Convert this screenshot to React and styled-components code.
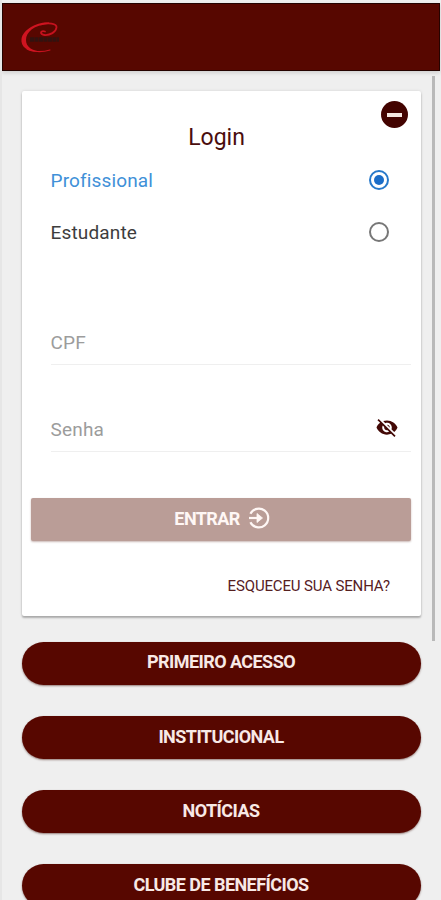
import React, { useState } from "react";
import styled, { createGlobalStyle } from "styled-components";
import { IoMdEyeOff } from "react-icons/io";

const GlobalStyle = createGlobalStyle`
  * { box-sizing: border-box; }
  body {
    margin: 0;
    background: #efefef;
    font-family: Roboto, "Liberation Sans", sans-serif;
    overflow: hidden;
  }
  button { font-family: inherit; border: 0; cursor: pointer; }
`;

const Screen = styled.div`
  width: 441px;
  height: 900px;
  overflow: hidden;
  background: #efefef;
  border-left: 2px solid #e6e6e6;
  display: flex;
  flex-direction: column;
`;

const Header = styled.header`
  flex: none;
  height: 68px;
  margin: 3px 1px 0 0;
  padding-left: 17px;
  display: flex;
  align-items: center;
  background: #570700;
  border: 1px solid #250300;
  box-shadow: 0 2px 4px rgba(0, 0, 0, 0.13);
`;

const Body = styled.div`
  flex: 1;
  min-height: 0;
  display: flex;
  justify-content: space-between;
`;

const Content = styled.main`
  width: 399px;
  margin: 20px 0 0 20px;
`;

const ScrollThumb = styled.div`
  width: 3px;
  height: 565px;
  margin: 5px 6px 0 0;
  background: #b9b9b9;
`;

const Card = styled.section`
  height: 524.5px;
  padding: 10px 10px 0 9px;
  display: flex;
  flex-direction: column;
  background: #fff;
  border-radius: 2px;
  box-shadow: 0 2px 2px rgba(0, 0, 0, 0.26), 0 0 3px rgba(0, 0, 0, 0.12);
`;

const CardTop = styled.div`
  height: 53px;
  padding-right: 1px;
  display: grid;
  grid-template-columns: 20px 1fr 28px;
`;

const Title = styled.h1`
  grid-column: 2;
  margin: 23px 0 0;
  font-size: 23px;
  line-height: 28px;
  font-weight: 400;
  letter-spacing: 0;
  text-align: center;
  color: #4a0d0d;
`;

const CollapseButton = styled.button`
  width: 27px;
  height: 27px;
  padding: 0;
  margin-left: -1px;
  border-radius: 50%;
  display: flex;
  align-items: center;
  justify-content: center;
  background: #430300;
`;

const MinusBar = styled.span`
  width: 15px;
  height: 4px;
  background: #f4e6e0;
`;

const Option = styled.button`
  height: 52.5px;
  padding: 0 22px 0 19.5px;
  display: flex;
  align-items: center;
  justify-content: space-between;
  background: transparent;
  font-size: 19px;
  letter-spacing: 0.15px;
  color: ${(p) => (p.$checked ? "#4090d8" : "#3d3d3d")};
`;

const RadioRing = styled.span`
  width: 20px;
  height: 20px;
  margin-bottom: 1px;
  border: 2px solid ${(p) => (p.$checked ? "#2779ca" : "#777")};
  border-radius: 50%;
  display: flex;
  align-items: center;
  justify-content: center;
`;

const RadioDot = styled.span`
  width: 10px;
  height: 10px;
  border-radius: 50%;
  background: #1b6dc8;
`;

const Fields = styled.div`
  margin: 62px 0 0 19.5px;
`;

const Field = styled.label`
  height: ${(p) => p.$height}px;
  padding: 0 12px 9px 0;
  display: flex;
  align-items: flex-end;
  justify-content: space-between;
  border-bottom: 1px solid #efefef;
`;

const FieldInput = styled.input`
  width: 280px;
  height: 24px;
  padding: 0;
  border: 0;
  outline: 0;
  background: transparent;
  font: 400 19px/24px Roboto, "Liberation Sans", sans-serif;
  letter-spacing: 0.2px;
  &::placeholder { color: #9c9c9c; opacity: 1; }
`;

const EyeButton = styled.span`
  height: 26px;
  display: flex;
  color: #430906;
`;

const SubmitButton = styled.button`
  height: 43px;
  margin-top: 45.5px;
  padding: 0 0 2px 2px;
  flex: none;
  display: flex;
  align-items: center;
  justify-content: center;
  gap: 8px;
  background: #ba9d97;
  border-radius: 2px;
  box-shadow: 0 1px 2px rgba(80, 20, 10, 0.3);
  font-size: 18px;
  font-weight: 700;
  letter-spacing: -0.6px;
  color: #fff7f5;
`;

const ForgotLink = styled.a`
  margin: 35px 21px 0 0;
  align-self: flex-end;
  font-size: 15px;
  line-height: 20px;
  letter-spacing: -0.14px;
  color: #56201f;
`;

const Menu = styled.nav`
  margin-top: 26px;
  display: flex;
  flex-direction: column;
  gap: 30.8px;
`;

const MenuButton = styled.button`
  height: 43.4px;
  flex: none;
  padding: 0 1px 2.5px 0;
  border-radius: 22px;
  background: #570700;
  box-shadow: 0 1px 2px rgba(60, 10, 0, 0.5);
  font-size: 18px;
  font-weight: 700;
  letter-spacing: -0.55px;
  color: #f8e9e6;
`;

const menu = ["PRIMEIRO ACESSO", "INSTITUCIONAL", "NOTÍCIAS", "CLUBE DE BENEFÍCIOS"];
const profiles = ["Profissional", "Estudante"];

const Logo = () => (
  <svg width="44" height="36" viewBox="0 0 44 36" aria-label="Logo">
    <g fill="none" stroke="#c5121e" strokeLinecap="round">
      <path d="M25 12.5C20 11 19.5 15.5 24.5 16C30 16.5 36 13 36.5 8.5C37 4 28 3.5 21 5.5" strokeWidth="1.8" />
      <path d="M30 31C22 33.5 12 33 7 30" strokeWidth="1.1" />
    </g>
    <path
      d="M29 3.6C18 2.5 3 10 1.5 20C0.5 28 8 34 22 32.5C12 32 6 28 6 21C6 13 14 6 29 4.8Z"
      fill="#cf1420"
    />
    <path d="M10 20.5H39" stroke="#2f1411" strokeWidth="4.5" strokeDasharray="4 .5" opacity="0.9" />
  </svg>
);

const EnterIcon = () => (
  <svg width="22" height="22" viewBox="0 0 22 22" fill="none" stroke="currentColor" strokeWidth="2.2">
    <path d="M2.4 6.8A9.4 9.4 0 1 1 2.4 15.2" />
    <path d="M1 11H10" />
    <path d="M9 6.5L14.5 11L9 15.5Z" fill="currentColor" strokeWidth="0.8" />
  </svg>
);

export default function App() {
  const [selected, setSelected] = useState(profiles[0]);
  return (
    <>
      <GlobalStyle />
      <Screen>
        <Header><Logo /></Header>
        <Body>
          <Content>
            <Card>
              <CardTop>
                <Title>Login</Title>
                <CollapseButton aria-label="Recolher"><MinusBar /></CollapseButton>
              </CardTop>
              {profiles.map((name) => (
                <Option key={name} $checked={selected === name} onClick={() => setSelected(name)}>
                  {name}
                  <RadioRing $checked={selected === name}>
                    {selected === name && <RadioDot />}
                  </RadioRing>
                </Option>
              ))}
              <Fields>
                <Field $height={44}><FieldInput placeholder="CPF" /></Field>
                <Field $height={87}>
                  <FieldInput type="password" placeholder="Senha" />
                  <EyeButton><IoMdEyeOff size={24} /></EyeButton>
                </Field>
              </Fields>
              <SubmitButton>ENTRAR<EnterIcon /></SubmitButton>
              <ForgotLink>ESQUECEU SUA SENHA?</ForgotLink>
            </Card>
            <Menu>
              {menu.map((label) => <MenuButton key={label}>{label}</MenuButton>)}
            </Menu>
          </Content>
          <ScrollThumb />
        </Body>
      </Screen>
    </>
  );
}
